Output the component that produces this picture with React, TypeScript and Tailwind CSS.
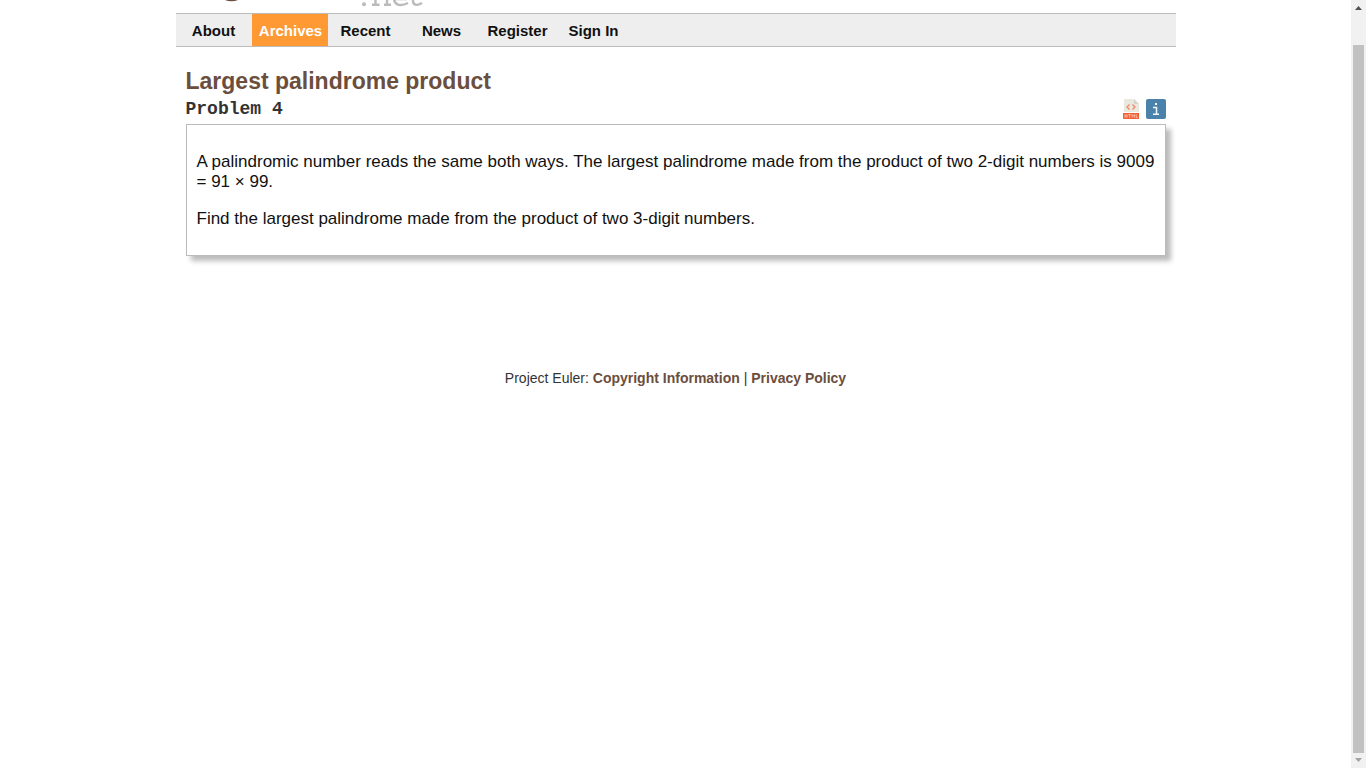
const links = ["About", "Archives", "Recent", "News", "Register", "Sign In"];

function Logo() {
  return (
    <header className="flex h-[13px] items-start overflow-hidden" aria-label="Project Euler .net">
      <svg className="h-[8px] w-full" viewBox="0 0 1000 8" preserveAspectRatio="xMinYMin slice" aria-hidden="true">
        <path d="M49 0H62Q59 1.200 55.500 1.200Q52 1.200 49 0Z" fill="#6b4e3d" />
        <circle cx="188" cy="4.200" r="2" fill="#bbb" />
        <g fill="none" stroke="#bbb" strokeWidth="2.400">
          <path d="M199.500 -4V5M196 4.800H203.500M211 -4V5M208 4.800H215" />
          <path d="M217 -1H231M218 -2C218 6.500 226 6 232 3" />
          <path d="M237 -4V1C237 6 242 5.500 246 3" />
        </g>
      </svg>
    </header>
  );
}

function HtmlIcon() {
  return (
    <svg width="20" height="20" viewBox="0 0 20 20" aria-hidden="true">
      <path d="M3 0H13L18 5V13H3Z" fill="#e9e9e0" />
      <path d="M13 0V5H18Z" fill="#d5d4ca" />
      <path d="M2 14H18V20H3Q2 20 2 19Z" fill="#f06236" />
      <path d="M8.500 5.500L6 8L8.500 10.500M11.500 5.500L14 8L11.500 10.500" fill="none" stroke="#f28b6c" strokeWidth="1.400" />
      <path d="M4 15.300V18.700M6 15.300V18.700M4 17H6M7.200 15.600H9.800M8.500 15.600V18.700M11 18.700V15.500L12.300 17.200L13.600 15.500V18.700M15.200 15.300V18.400H17" fill="none" stroke="#ffd9cc" strokeWidth=".7" />
    </svg>
  );
}

function InfoIcon() {
  return (
    <svg width="20" height="20" viewBox="0 0 20 20" aria-hidden="true">
      <rect width="20" height="20" rx="2" fill="#4b82ac" />
      <rect x="9" y="4" width="2" height="2" fill="#f2f6f9" />
      <path d="M7 8.500H10.500V15M7 15.200H13" fill="none" stroke="#f2f6f9" strokeWidth="1.500" />
    </svg>
  );
}

function ScrollBar() {
  return (
    <div className="sticky top-0 flex h-screen w-[15px] shrink-0 flex-col items-center bg-[#f1f1f1]" aria-hidden="true">
      <svg className="h-[15px] w-[15px] shrink-0" viewBox="0 0 15 15">
        <path d="M4 10L7.500 6L11 10Z" fill="#505050" />
      </svg>
      <div className="mt-[30px] w-[11px] flex-1 bg-[#c1c1c1]" />
      <svg className="h-[15px] w-[15px] shrink-0" viewBox="0 0 15 15">
        <path d="M4 5L7.500 9L11 5Z" fill="#a3a3a3" />
      </svg>
    </div>
  );
}

export default function App() {
  return (
    <div className="flex min-h-screen bg-white font-['Liberation_Sans',Arial,sans-serif] text-[#111]">
      <div className="min-w-0 flex-1">
        <div className="mx-auto max-w-[1000px]">
          <Logo />
          <nav className="flex border-y border-[#bbb] bg-[#eee]">
            {links.map((name) => (
              <a
                key={name}
                href="#"
                className={
                  name === "Archives"
                    ? "w-[76px] whitespace-nowrap bg-[#ff9933] pt-[2px] pl-[2px] text-center text-[15px] leading-[30px] font-bold text-white"
                    : "w-[76px] whitespace-nowrap pt-[2px] text-center text-[15px] leading-[30px] font-bold"
                }
              >
                {name}
              </a>
            ))}
          </nav>
          <main className="px-[10px] pt-5">
            <h2 className="text-[23px] leading-7 font-bold text-[#6b4e3d]">Largest palindrome product</h2>
            <div className="flex items-center justify-between pt-1 pb-[5px]">
              <h3 className="font-['Liberation_Mono','Courier_New',monospace] text-[18px] leading-5 font-bold text-[#333]">
                Problem 4
              </h3>
              <div className="flex gap-[5px]">
                <a href="#" aria-label="Minimal HTML"><HtmlIcon /></a>
                <a href="#" aria-label="Problem information"><InfoIcon /></a>
              </div>
            </div>
            <section className="flex flex-col gap-[17px] border border-[#bbb] bg-white px-[10px] pt-[27px] pb-[26px] text-[17px] leading-5 shadow-[5px_5px_5px_#bbb]">
              <p>
                A palindromic number reads the same both ways. The largest palindrome made from the product of two
                2-digit numbers is 9009 = 91 × 99.
              </p>
              <p>Find the largest palindrome made from the product of two 3-digit numbers.</p>
            </section>
          </main>
          <footer className="pt-28 text-center text-[14px] leading-5 text-[#333]">
            Project Euler:{" "}
            <a href="#" className="font-bold text-[#6b4e3d]">Copyright Information</a> |{" "}
            <a href="#" className="font-bold text-[#6b4e3d]">Privacy Policy</a>
          </footer>
        </div>
      </div>
      <ScrollBar />
    </div>
  );
}
